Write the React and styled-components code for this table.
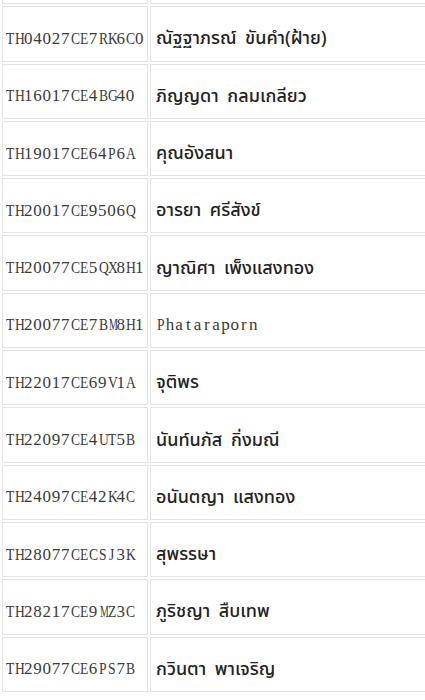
import styled, { createGlobalStyle } from "styled-components";

const GlobalStyle = createGlobalStyle`
  html, body {
    margin: 0;
    padding: 0;
    background: #ffffff;
    overflow: hidden;
  }
`;

const rows = [
  ["TH04027CE7RK6C0", "ณัฐฐาภรณ์ ขันคำ(ฝ้าย)"],
  ["TH16017CE4BG40", "ภิญญดา กลมเกลียว"],
  ["TH19017CE64P6A", "คุณอังสนา"],
  ["TH20017CE9506Q", "อารยา ศรีสังข์"],
  ["TH20077CE5QX8H1", "ญาณิศา เพ็งแสงทอง"],
  ["TH20077CE7BM8H1", "Phataraporn"],
  ["TH22017CE69V1A", "จุติพร"],
  ["TH22097CE4UT5B", "นันท์นภัส กิ่งมณี"],
  ["TH24097CE42K4C", "อนันตญา แสงทอง"],
  ["TH28077CECSJ3K", "สุพรรษา"],
  ["TH28217CE9MZ3C", "ภูริชญา สืบเทพ"],
  ["TH29077CE6PS7B", "กวินตา พาเจริญ"],
];

const Page = styled.div`
  width: 425px;
  height: 700px;
  overflow: hidden;
`;

const Table = styled.table`
  margin-top: -53px;
  width: 520px;
  border-collapse: separate;
  border-spacing: 2px;
  table-layout: fixed;
`;

const Row = styled.tr`
  height: 55.3px;
`;

const Cell = styled.td`
  border: 1px solid #e4e4e4;
  vertical-align: middle;
  padding: 10px 0 0 ${(p) => (p.$code ? "2px" : "5px")};
  width: ${(p) => (p.$code ? "142px" : "auto")};
  white-space: nowrap;
  overflow: hidden;
`;

// half-width serif glyphs, one fixed pitch per character
const Mono = styled.span`
  font-family: "Liberation Serif", "DejaVu Serif", serif;
  font-size: 17px;
  color: #3a3a3a;
`;

const Ch = styled.span`
  display: inline-block;
  width: 9.25px;
  text-align: center;
  transform: scaleX(${(p) => p.$scale});
`;

const Thai = styled.span`
  font-family: "Noto Sans Thai", Tahoma, sans-serif;
  font-size: 18px;
  font-weight: 500;
  word-spacing: 4px;
  color: #222;
`;

const isThai = (s) => /[\u0E00-\u0E7F]/.test(s);

const fit = (c) => {
  if ("MWmw".includes(c)) return 0.58;
  if (/[A-Z]/.test(c)) return 0.8;
  return 1;
};

const MonoText = ({ text }) => (
  <Mono>
    {text.split("").map((c, i) => (
      <Ch key={i} $scale={fit(c)}>
        {c}
      </Ch>
    ))}
  </Mono>
);

export default function App() {
  return (
    <Page>
      <GlobalStyle />
      <Table>
        <tbody>
          <Row>
            <Cell $code />
            <Cell />
          </Row>
          {rows.map(([code, name]) => (
            <Row key={code}>
              <Cell $code>
                <MonoText text={code} />
              </Cell>
              <Cell>
                {isThai(name) ? <Thai>{name}</Thai> : <MonoText text={name} />}
              </Cell>
            </Row>
          ))}
        </tbody>
      </Table>
    </Page>
  );
}
